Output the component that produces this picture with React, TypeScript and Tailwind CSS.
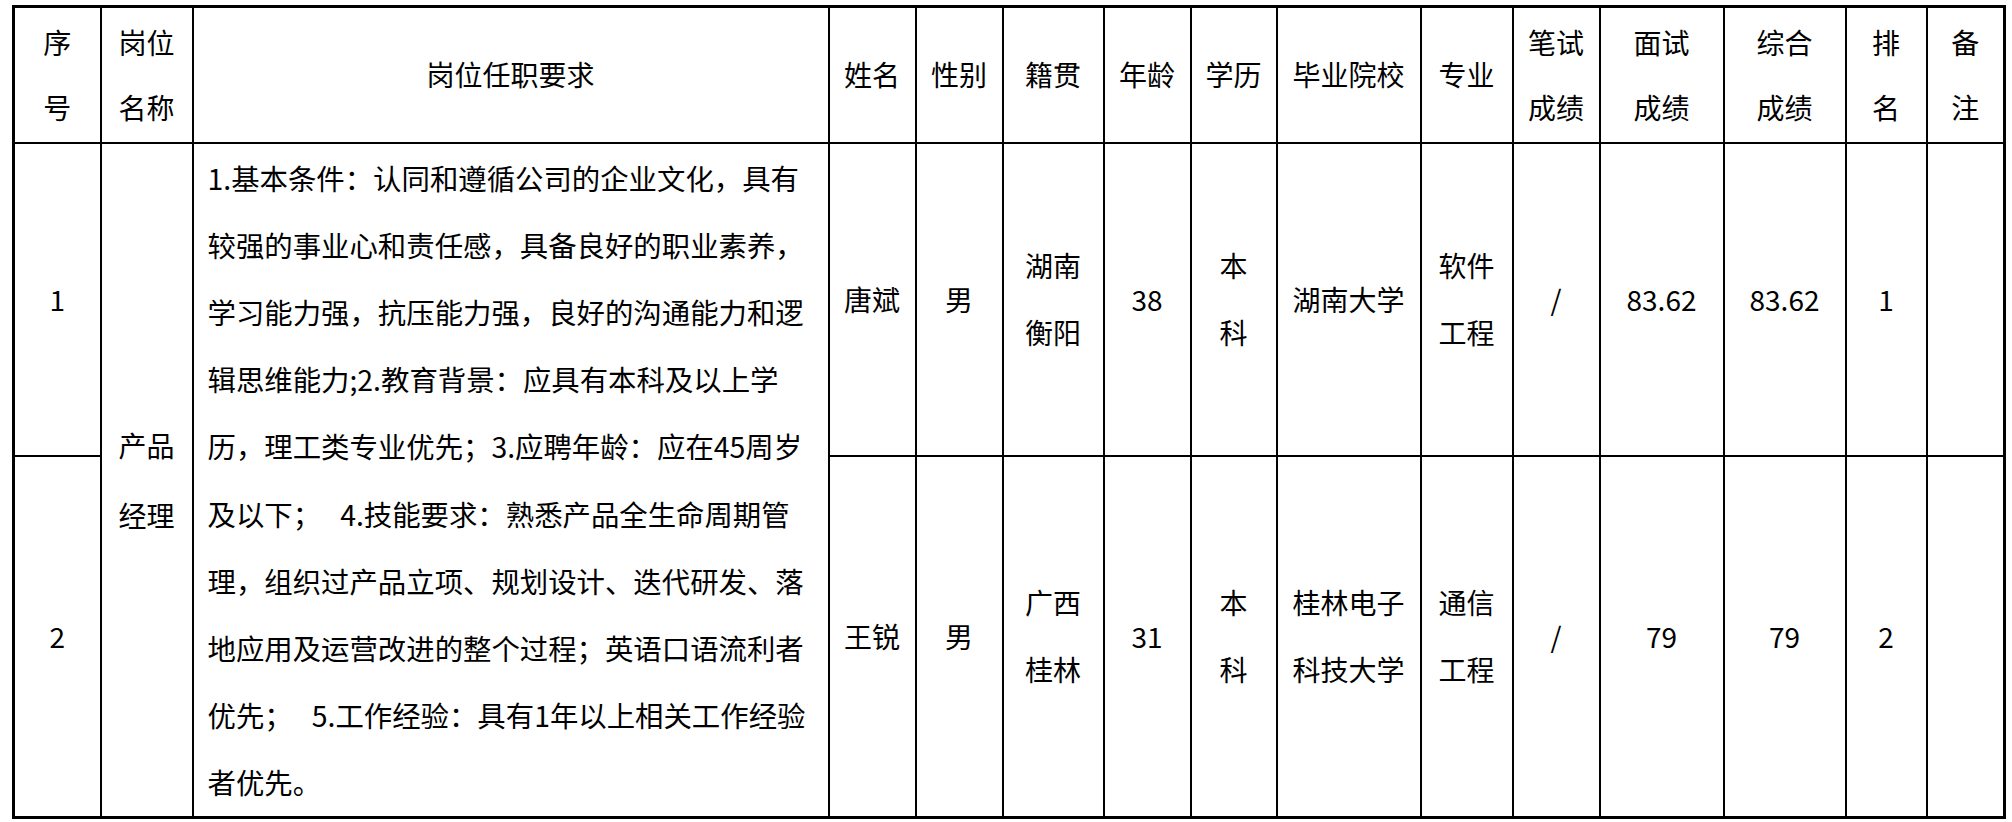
const FONT = "font-['Noto_Sans_CJK_SC','Noto_Sans',sans-serif]"

const widths = [87, 92, 636, 87, 87, 101, 87, 86, 144, 92, 87, 124, 122, 81, 78]

const requirementLines = [
  '1.基本条件：认同和遵循公司的企业文化，具有',
  '较强的事业心和责任感，具备良好的职业素养，',
  '学习能力强，抗压能力强，良好的沟通能力和逻',
  '辑思维能力;2.教育背景：应具有本科及以上学',
  '历，理工类专业优先；3.应聘年龄：应在45周岁',
  '及以下；\u00a0\u00a0\u00a04.技能要求：熟悉产品全生命周期管',
  '理，组织过产品立项、规划设计、迭代研发、落',
  '地应用及运营改进的整个过程；英语口语流利者',
  '优先；\u00a0\u00a0\u00a05.工作经验：具有1年以上相关工作经验',
  '者优先。',
]

type Candidate = {
  no: string
  name: string
  gender: string
  origin: string[]
  age: string
  degree: string[]
  school: string[]
  major: string[]
  written: string
  interview: string
  total: string
  rank: string
}

const candidates: Candidate[] = [
  {
    no: '1',
    name: '唐斌',
    gender: '男',
    origin: ['湖南', '衡阳'],
    age: '38',
    degree: ['本', '科'],
    school: ['湖南大学'],
    major: ['软件', '工程'],
    written: '/',
    interview: '83.62',
    total: '83.62',
    rank: '1',
  },
  {
    no: '2',
    name: '王锐',
    gender: '男',
    origin: ['广西', '桂林'],
    age: '31',
    degree: ['本', '科'],
    school: ['桂林电子', '科技大学'],
    major: ['通信', '工程'],
    written: '/',
    interview: '79',
    total: '79',
    rank: '2',
  },
]

const headers: string[][] = [
  ['序', '号'],
  ['岗位', '名称'],
  ['岗位任职要求'],
  ['姓名'],
  ['性别'],
  ['籍贯'],
  ['年龄'],
  ['学历'],
  ['毕业院校'],
  ['专业'],
  ['笔试', '成绩'],
  ['面试', '成绩'],
  ['综合', '成绩'],
  ['排', '名'],
  ['备', '注'],
]

const cell = 'border-2 border-black p-0 text-center align-middle'

function Lines({ lines }: { lines: string[] }) {
  return (
    <>
      {lines.map((l, i) => (
        <div key={i}>{l}</div>
      ))}
    </>
  )
}

export default function App() {
  return (
    <div className={`min-h-screen bg-white pl-[12px] pt-[5px] text-black ${FONT}`}>
      <table className="w-[1993px] table-fixed border-collapse border-[3px] border-black text-[28px] leading-[67px]">
        <colgroup>
          {widths.map((w, i) => (
            <col key={i} style={{ width: w }} />
          ))}
        </colgroup>
        <thead>
          <tr className="h-[136px]">
            {headers.map((h, i) => (
              <th key={i} className={`${cell} font-normal leading-[65px]`}>
                <Lines lines={h} />
              </th>
            ))}
          </tr>
        </thead>
        <tbody>
          {candidates.map((c, idx) => (
            <tr key={c.no} className={idx === 0 ? 'h-[313px]' : 'h-[361px]'}>
              <td className={cell}>{c.no}</td>
              {idx === 0 && (
                <>
                  <td rowSpan={2} className={`${cell} leading-[70px]`}>
                    <div>产品</div>
                    <div>经理</div>
                  </td>
                  <td rowSpan={2} className={`${cell} px-[14px] text-left text-[28.4px] leading-[67.2px] whitespace-nowrap`}>
                    <Lines lines={requirementLines} />
                  </td>
                </>
              )}
              <td className={cell}>{c.name}</td>
              <td className={cell}>{c.gender}</td>
              <td className={cell}>
                <Lines lines={c.origin} />
              </td>
              <td className={cell}>{c.age}</td>
              <td className={cell}>
                <Lines lines={c.degree} />
              </td>
              <td className={cell}>
                <Lines lines={c.school} />
              </td>
              <td className={cell}>
                <Lines lines={c.major} />
              </td>
              <td className={cell}>{c.written}</td>
              <td className={cell}>{c.interview}</td>
              <td className={cell}>{c.total}</td>
              <td className={cell}>{c.rank}</td>
              <td className={cell}></td>
            </tr>
          ))}
        </tbody>
      </table>
    </div>
  )
}
